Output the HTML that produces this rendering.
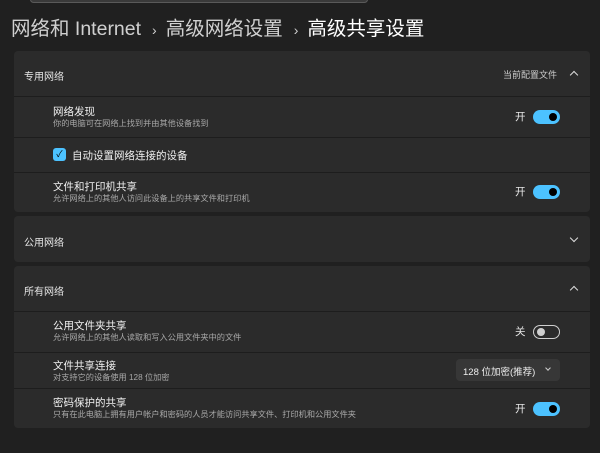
<!DOCTYPE html>
<html><head><meta charset="utf-8"><style>
*{margin:0;padding:0;box-sizing:border-box}
body{width:600px;height:453px;background:#202020;font-family:"Liberation Sans","Noto Sans CJK SC",sans-serif;color:#fff;position:relative;overflow:hidden}
.abs{position:absolute}
.card{position:absolute;left:14px;width:576px;background:#2b2b2b;border-radius:4px}
.sep{position:absolute;left:14px;width:576px;height:1px;background:#1d1d1d}
.h{position:absolute;left:24px;font-size:10px;color:#e6e6e6}
.t{position:absolute;left:53px;font-size:10.5px;color:#f0f0f0;line-height:12px}
.s{position:absolute;left:53px;font-size:8.2px;color:#a8a8a8;line-height:10px;white-space:nowrap}
.tg{position:absolute;left:533px;width:27px;height:14px;border-radius:7px;background:#4cc2ff}
.tg::after{content:"";position:absolute;right:3px;top:3px;width:8px;height:8px;border-radius:50%;background:#000}
.off{background:transparent;border:1px solid #cfcfcf}
.off::after{left:3px;right:auto;top:2px;background:#cfcfcf}
.lb{position:absolute;left:515px;font-size:10.5px;color:#e6e6e6}
.chev{position:absolute;left:571px;width:6px;height:6px;border-left:1.2px solid #ddd;border-top:1.2px solid #ddd}
</style></head><body>
<div class="abs" style="left:30px;top:-4px;width:338px;height:7px;border-radius:4px;background:#3a3a3a;border:1px solid #5a5a5a"></div>
<div class="abs" style="left:11px;top:12px;font-size:19.5px;color:#d0d0d0;white-space:nowrap">网络和 Internet<span style="font-size:14px;margin:0 9px 0 11px">›</span>高级网络设置<span style="font-size:14px;margin:0 9px 0 11px">›</span><span style="color:#fff">高级共享设置</span></div>

<div class="card" style="top:51px;height:161px"></div>
<div class="h" style="top:68px">专用网络</div>
<div class="abs" style="left:503px;top:68px;font-size:9px;color:#ccc">当前配置文件</div>
<div class="chev" style="top:72px;transform:rotate(45deg)"></div>
<div class="sep" style="top:96px"></div>
<div class="t" style="top:106px">网络发现</div>
<div class="s" style="top:119px">你的电脑可在网络上找到并由其他设备找到</div>
<div class="lb" style="top:109px">开</div><div class="tg" style="top:110px"></div>
<div class="sep" style="top:137px"></div>
<div class="abs" style="left:53px;top:148px;width:13px;height:13px;border-radius:3px;background:#4cc2ff;color:#000;font-size:9px;text-align:center;line-height:13px">✓</div>
<div class="abs" style="left:72px;top:148px;font-size:10.5px;color:#f0f0f0">自动设置网络连接的设备</div>
<div class="sep" style="top:172px"></div>
<div class="t" style="top:181px">文件和打印机共享</div>
<div class="s" style="top:194px">允许网络上的其他人访问此设备上的共享文件和打印机</div>
<div class="lb" style="top:184px">开</div><div class="tg" style="top:185px"></div>

<div class="card" style="top:216px;height:46px"></div>
<div class="h" style="top:234px">公用网络</div>
<div class="chev" style="top:235px;transform:rotate(225deg)"></div>

<div class="card" style="top:266px;height:162px"></div>
<div class="h" style="top:283px">所有网络</div>
<div class="chev" style="top:287px;transform:rotate(45deg)"></div>
<div class="sep" style="top:311px"></div>
<div class="t" style="top:320px">公用文件夹共享</div>
<div class="s" style="top:333px">允许网络上的其他人读取和写入公用文件夹中的文件</div>
<div class="lb" style="top:324px">关</div><div class="tg off" style="top:325px"></div>
<div class="sep" style="top:352px"></div>
<div class="t" style="top:360px">文件共享连接</div>
<div class="s" style="top:373px">对支持它的设备使用 128 位加密</div>
<div class="abs" style="left:456px;top:359px;width:104px;height:22px;background:#373737;border-radius:4px;font-size:9.5px;color:#eee;padding:5px 0 0 7px;white-space:nowrap">128 位加密(推荐)</div>
<div class="abs" style="left:546px;top:366px;width:4px;height:4px;border-right:1px solid #ccc;border-bottom:1px solid #ccc;transform:rotate(45deg)"></div>
<div class="sep" style="top:388px"></div>
<div class="t" style="top:397px">密码保护的共享</div>
<div class="s" style="top:410px">只有在此电脑上拥有用户帐户和密码的人员才能访问共享文件、打印机和公用文件夹</div>
<div class="lb" style="top:401px">开</div><div class="tg" style="top:402px"></div>
</body></html>
